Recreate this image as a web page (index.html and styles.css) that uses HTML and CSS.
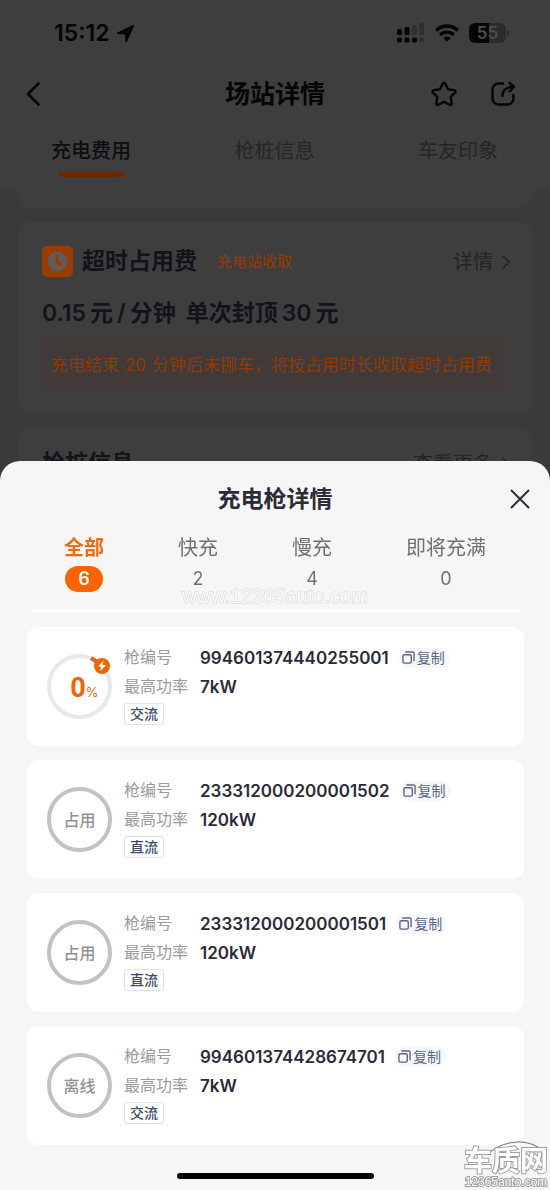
FILE: index.html
```html
<!DOCTYPE html>
<html lang="zh-CN">
<head>
<meta charset="utf-8">
<meta name="viewport" content="width=device-width, initial-scale=1">
<title>场站详情</title>
<link rel="stylesheet" href="styles.css">
</head>
<body>
<div class="page">
  <header class="top">
    <div class="status">
      <div class="status-side">
        <span class="time">15:12</span>
        <svg class="i-loc" viewBox="0 0 20 20"><path d="M18.500 1.500 1.500 9.800l8.500.400.800 8.300z" fill="currentColor" stroke="currentColor" stroke-width="1.500" stroke-linejoin="round"/></svg>
      </div>
      <div class="status-side status-right">
        <svg class="i-sig" viewBox="0 0 28 20"><g fill="currentColor"><rect x="0" y="6" width="5" height="6" rx="1.500"/><rect x="7.500" y="4" width="5" height="8" rx="1.500"/><rect x="0" y="14.500" width="5" height="5" rx="1.500"/><rect x="7.500" y="14.500" width="5" height="5" rx="1.500"/><rect x="15" y="14.500" width="5" height="5" rx="1.500"/></g><g fill="#2f2f2f"><rect x="15" y="2.500" width="5" height="9.500" rx="1.500"/><rect x="22.500" y="0" width="4.500" height="12" rx="1.500"/><rect x="22.500" y="14.500" width="4.500" height="5" rx="1.500"/></g></svg>
        <svg class="i-wifi" viewBox="0 0 24 18"><g fill="none" stroke="currentColor" stroke-width="3.400"><path d="M1.200 6.600C7.200.5 16.800.5 22.800 6.600"/><path d="M5.200 10.900c3.800-3.700 9.800-3.700 13.600 0"/></g><path d="M8.300 14c2.100-2 5.300-2 7.400 0L12 17.800z" fill="currentColor"/></svg>
        <span class="battery"><span class="battery-body"><span>5</span><span>5</span></span><span class="battery-cap"></span></span>
      </div>
    </div>
    <nav class="nav">
      <button class="icon-btn nav-left" aria-label="返回"><svg class="i-back" viewBox="0 0 14 24"><path d="M12.500 1.500 2 12l10.500 10.500" fill="none" stroke="currentColor" stroke-width="2.600" stroke-linecap="round" stroke-linejoin="round"/></svg></button>
      <h1 class="nav-title">场站详情</h1>
      <div class="nav-right">
        <button class="icon-btn" aria-label="收藏"><svg class="i-nav" viewBox="0 0 26 26"><path d="M13 1.800c.6 0 1 .3 1.300.9l2.700 5.500 6.200.9c1.300.2 1.800 1.600.9 2.500l-4.500 4.400 1.100 6.200c.2 1.300-1 2.100-2.100 1.500L13 20.800l-5.600 2.900c-1.100.6-2.300-.2-2.100-1.500l1.100-6.200-4.500-4.400c-.9-.9-.4-2.300.9-2.500L9 8.200l2.700-5.500c.3-.6.700-.9 1.300-.9z" fill="none" stroke="currentColor" stroke-width="2.400" stroke-linejoin="round"/></svg></button>
        <button class="icon-btn" aria-label="分享"><svg class="i-nav" viewBox="0 0 26 26"><g fill="none" stroke="currentColor" stroke-width="2.400" stroke-linecap="round" stroke-linejoin="round"><path d="M13 2.500H8.500a6 6 0 0 0-6 6v9a6 6 0 0 0 6 6h9a6 6 0 0 0 6-6V14"/><path d="M12.500 15c0-5.500 3.500-9 11-9M19.500 2l4.500 4-4.500 4.500"/></g></svg></button>
      </div>
    </nav>
    <div class="tabs">
      <button class="tab tab-on">充电费用</button>
      <button class="tab">枪桩信息</button>
      <button class="tab">车友印象</button>
    </div>
  </header>
  <main class="list">
    <section class="panel panel-tail"></section>
    <section class="panel fee">
      <div class="row">
        <svg class="i-clock" viewBox="0 0 31 31"><rect width="31" height="31" rx="5" fill="#983c02"/><circle cx="15.500" cy="15.500" r="10" fill="#625a56"/><path d="M15 10v6.500l4 2" fill="none" stroke="#983c02" stroke-width="2.600" stroke-linecap="round" stroke-linejoin="round"/></svg>
        <h2 class="h">超时占用费</h2>
        <span class="tag">充电站收取</span>
        <a class="more" href="#fee">详情<svg class="i-chev" viewBox="0 0 10 14"><path d="m2 1 6 6-6 6" fill="none" stroke="currentColor" stroke-width="1.500"/></svg></a>
      </div>
      <p class="price"><span>0.15</span><span>元</span><span>/</span><span>分钟</span><span class="cap">单次封顶</span><span>30</span><span>元</span></p>
      <p class="notice">充电结束<span class="num">20</span>分钟后未挪车，将按占用时长收取超时占用费</p>
    </section>
    <section class="panel guns">
      <div class="row">
        <h2 class="h">枪桩信息</h2>
        <a class="more" href="#guns">查看更多<svg class="i-chev" viewBox="0 0 10 14"><path d="m2 1 6 6-6 6" fill="none" stroke="currentColor" stroke-width="1.500"/></svg></a>
      </div>
    </section>
  </main>
</div>

<div class="sheet" role="dialog" aria-labelledby="sheet-title">
  <div class="sheet-head">
    <h2 class="sheet-title" id="sheet-title">充电枪详情</h2>
    <button class="icon-btn close" aria-label="关闭"><svg class="i-x" viewBox="0 0 20 20"><path d="m1.500 1.500 17 17m0-17-17 17" stroke="currentColor" stroke-width="2" stroke-linecap="round"/></svg></button>
  </div>
  <div class="filters">
    <button class="filter filter-on"><span>全部</span><span class="count">6</span></button>
    <button class="filter"><span>快充</span><span class="count">2</span></button>
    <button class="filter"><span>慢充</span><span class="count">4</span></button>
    <button class="filter"><span>即将充满</span><span class="count">0</span></button>
    <span class="mark">www.12365auto.com</span>
  </div>
  <div class="rule"></div>
  <div class="cards">
    <article class="card">
      <div class="ring ring-free"><b>0</b><small>%</small>
        <svg class="i-plug" viewBox="0 0 22 20"><path d="m2 3 8 5" stroke="#ec6608" stroke-width="4"/><circle cx="13" cy="11" r="8" fill="#ec6608"/><path d="m14.500 5.500-5.500 6h3.200l-1 4.800 5.800-6.300h-3.300z" fill="#fff"/></svg>
      </div>
      <dl class="info">
        <dt>枪编号</dt><dd>994601374440255001<button class="copy"><svg class="i-copy" viewBox="0 0 14 14"><g fill="none" stroke="currentColor" stroke-width="1.500" stroke-linejoin="round"><rect x="1" y="4" width="9" height="9" rx="1.500"/><path d="M3.500 1h8A1.500 1.500 0 0 1 13 2.500V11"/></g></svg>复制</button></dd>
        <dt>最高功率</dt><dd>7kW</dd>
        <dt class="kind">交流</dt>
      </dl>
    </article>
    <article class="card">
      <div class="ring">占用</div>
      <dl class="info">
        <dt>枪编号</dt><dd>233312000200001502<button class="copy"><svg class="i-copy" viewBox="0 0 14 14"><g fill="none" stroke="currentColor" stroke-width="1.500" stroke-linejoin="round"><rect x="1" y="4" width="9" height="9" rx="1.500"/><path d="M3.500 1h8A1.500 1.500 0 0 1 13 2.500V11"/></g></svg>复制</button></dd>
        <dt>最高功率</dt><dd>120kW</dd>
        <dt class="kind">直流</dt>
      </dl>
    </article>
    <article class="card">
      <div class="ring">占用</div>
      <dl class="info">
        <dt>枪编号</dt><dd>233312000200001501<button class="copy"><svg class="i-copy" viewBox="0 0 14 14"><g fill="none" stroke="currentColor" stroke-width="1.500" stroke-linejoin="round"><rect x="1" y="4" width="9" height="9" rx="1.500"/><path d="M3.500 1h8A1.500 1.500 0 0 1 13 2.500V11"/></g></svg>复制</button></dd>
        <dt>最高功率</dt><dd>120kW</dd>
        <dt class="kind">直流</dt>
      </dl>
    </article>
    <article class="card">
      <div class="ring">离线</div>
      <dl class="info">
        <dt>枪编号</dt><dd>994601374428674701<button class="copy"><svg class="i-copy" viewBox="0 0 14 14"><g fill="none" stroke="currentColor" stroke-width="1.500" stroke-linejoin="round"><rect x="1" y="4" width="9" height="9" rx="1.500"/><path d="M3.500 1h8A1.500 1.500 0 0 1 13 2.500V11"/></g></svg>复制</button></dd>
        <dt>最高功率</dt><dd>7kW</dd>
        <dt class="kind">交流</dt>
      </dl>
    </article>
  </div>
  <div class="home"></div>
  <div class="logo">
    <svg class="logo-arc" viewBox="0 0 88 24"><path d="M24 14C42-2 66-2 82 13" fill="none" stroke="#8a8a8a" stroke-width="3"/><path d="M24 15C42-1 66-1 82 14" fill="none" stroke="#fff" stroke-width="2.500"/></svg>
    <span class="logo-name">车质网</span>
    <span class="logo-url">12365auto.com</span>
  </div>
</div>
</body>
</html>
```
FILE: styles.css
```css
* { box-sizing: border-box; margin: 0; padding: 0; }
body {
  font-family: Inter, "Noto Sans CJK SC", sans-serif;
  background: #3a3a3c;
  color: #13131a;
  min-height: 100vh;
  overflow: hidden;
}
button { font: inherit; color: inherit; background: none; border: 0; }
a { color: inherit; text-decoration: none; }
svg { display: block; flex: none; }
.page { height: 100vh; overflow: hidden; }

/* dimmed header */
.top { background: #3e3e3e; color: #050505; }
.status { display: flex; justify-content: space-between; align-items: center; height: 66px; padding: 0 41px 0 54px; }
.status-side { display: flex; align-items: center; gap: 6px; }
.status-right { gap: 10px; }
.time { font-size: 23px; font-weight: 600; line-height: 28px; }
.i-loc { width: 19px; height: 19px; }
.i-sig { width: 28px; height: 20px; }
.i-wifi { width: 24px; height: 18px; }
.battery { display: flex; align-items: center; gap: 1px; }
.battery-body {
  display: flex; justify-content: center; align-items: center;
  width: 37px; height: 20px; border-radius: 6px;
  background: linear-gradient(90deg, #050505 55%, #2b2b2b 55%);
  color: #4c4c4c; font-size: 17px; font-weight: 600; line-height: 20px;
}
.battery-cap { width: 2px; height: 6px; border-radius: 1px; background: #2b2b2b; }
.nav { display: grid; grid-template-columns: 1fr auto 1fr; align-items: center; height: 56px; padding: 0 26px; }
.icon-btn { display: flex; align-items: center; justify-content: center; cursor: pointer; }
.nav-left { justify-self: start; }
.i-back { width: 14px; height: 24px; }
.nav-title { font-size: 25px; font-weight: 700; line-height: 32px; }
.nav-right { display: flex; gap: 33px; justify-self: end; padding-right: 8px; }
.i-nav { width: 26px; height: 26px; }
.tabs { display: flex; justify-content: space-between; height: 68px; padding: 14px 52px 0 51px; }
.tab { display: flex; flex-direction: column; align-items: center; gap: 6px; height: 41px; font-size: 20px; line-height: 30px; color: #25252a; }
.tab-on { font-weight: 500; color: #0d0d12; }
.tab-on::after { content: ""; width: 66px; height: 5px; border-radius: 3px; background: #6b2900; }

/* dimmed panels */
.list { display: flex; flex-direction: column; gap: 14px; padding: 0 18px 0 19px; }
.panel { background: #3e3e3e; border-radius: 12px; padding: 24px 26px 22px 23px; }
.panel-tail { height: 18px; padding: 0; border-radius: 0 0 12px 12px; }
.row { display: flex; align-items: center; height: 31px; }
.i-clock { width: 31px; height: 31px; margin-right: 9px; }
.h { font-size: 23px; font-weight: 700; line-height: 31px; }
.tag { margin-left: 12px; padding: 0 7px; border: 1px solid #483b36; border-radius: 3px; font-size: 15px; font-weight: 500; line-height: 24px; color: #8c3a08; }
.more { display: flex; align-items: center; gap: 8px; margin-left: auto; margin-right: -5px; font-size: 20px; line-height: 30px; color: #242428; }
.i-chev { width: 10px; height: 14px; }
.price { display: flex; gap: 4px; margin-top: 20px; font-size: 23px; font-weight: 600; line-height: 32px; }
.cap { margin-left: 6px; }
.notice { margin-top: 9px; padding: 0 9px; background: #413a38; font-size: 17px; line-height: 54px; color: #8c3a08; white-space: nowrap; }
.num { margin: 0 6px; }
.guns { padding-top: 20px; }

/* bottom sheet */
.sheet { position: fixed; left: 0; right: 0; bottom: 0; background: #f6f6f6; border-radius: 20px 20px 0 0; color: #2b2b38; }
.sheet-head { display: grid; grid-template-columns: 1fr auto 1fr; align-items: center; padding: 20px 20px 0; }
.sheet-title { grid-column: 2; font-size: 23px; font-weight: 700; line-height: 36px; }
.close { justify-self: end; }
.i-x { width: 20px; height: 20px; }
.filters { position: relative; display: flex; justify-content: space-between; padding: 16px 64px 0; }
.filter { display: flex; flex-direction: column; align-items: center; gap: 3px; font-size: 20px; line-height: 30px; color: #707076; cursor: pointer; }
.count { font-size: 18px; line-height: 26px; }
.filter-on { color: #f5690c; font-weight: 700; }
.filter-on .count { padding: 0 13px; border-radius: 13px; background: #fa6400; color: #fff; font-weight: 600; }
.mark {
  position: absolute; left: 0; right: 0; bottom: -14px; text-align: center;
  font-family: "Liberation Sans", sans-serif; font-size: 20px; line-height: 20px;
  color: #fafafa; -webkit-text-stroke: 1px #d4d4d4; paint-order: stroke; pointer-events: none;
}
.rule { height: 3px; margin: 17px 30px 0 32px; border-radius: 2px; background: #fff; }
.cards { display: flex; flex-direction: column; gap: 14px; padding: 15px 26px 0 27px; }
.card { display: flex; align-items: center; gap: 12px; height: 119px; padding: 0 20px; border-radius: 12px; background: #fff; }
.ring {
  position: relative; flex: none; display: flex; align-items: center; justify-content: center;
  width: 65px; height: 65px; border: 4px solid #c2c2c6; border-radius: 50%;
  font-size: 16px; font-weight: 500; line-height: 24px; color: #929296;
}
.ring-free { align-items: baseline; padding: 14px 0 0 10px; border-color: #e8e8e9; color: #ec6608; line-height: 32px; }
.ring-free b { font-family: Roboto, sans-serif; font-size: 27px; }
.ring-free small { font-size: 13px; font-weight: 400; }
.i-plug { position: absolute; top: -3px; right: -3px; width: 22px; height: 20px; }
.info { display: grid; grid-template-columns: 76px 1fr; row-gap: 4px; padding-bottom: 3px; font-size: 16px; line-height: 25px; }
.info dt { color: #9b9b9f; white-space: nowrap; }
.info dd { display: flex; align-items: center; gap: 10px; font-size: 17px; font-weight: 600; line-height: 24px; }
.info .kind { justify-self: start; padding: 0 5px; border: 1px solid #dfe2e8; border-radius: 3px; font-size: 14px; font-weight: 500; line-height: 20px; color: #3c4c68; }
.copy { display: flex; align-items: center; gap: 2px; padding: 0 5px 0 3px; border-radius: 10px; background: #f5f7fb; font-size: 14px; font-weight: 400; line-height: 20px; color: #5b6785; cursor: pointer; }
.i-copy { width: 13px; height: 13px; }
.home { width: 197px; height: 6px; margin: 28px auto 11px; border-radius: 3px; background: #000; }

/* corner logo */
.logo { position: absolute; right: 2px; bottom: 1px; display: flex; flex-direction: column; align-items: center; color: #fff; paint-order: stroke; }
.logo-arc { position: absolute; top: -5px; left: 0; width: 88px; height: 24px; }
.logo-name { position: relative; font-size: 28px; font-weight: 700; line-height: 30px; -webkit-text-stroke: 2px #a0a0a0; }
.logo-url { font-family: "Liberation Sans", sans-serif; font-size: 12px; line-height: 13px; -webkit-text-stroke: 2px #a0a0a0; }
```
